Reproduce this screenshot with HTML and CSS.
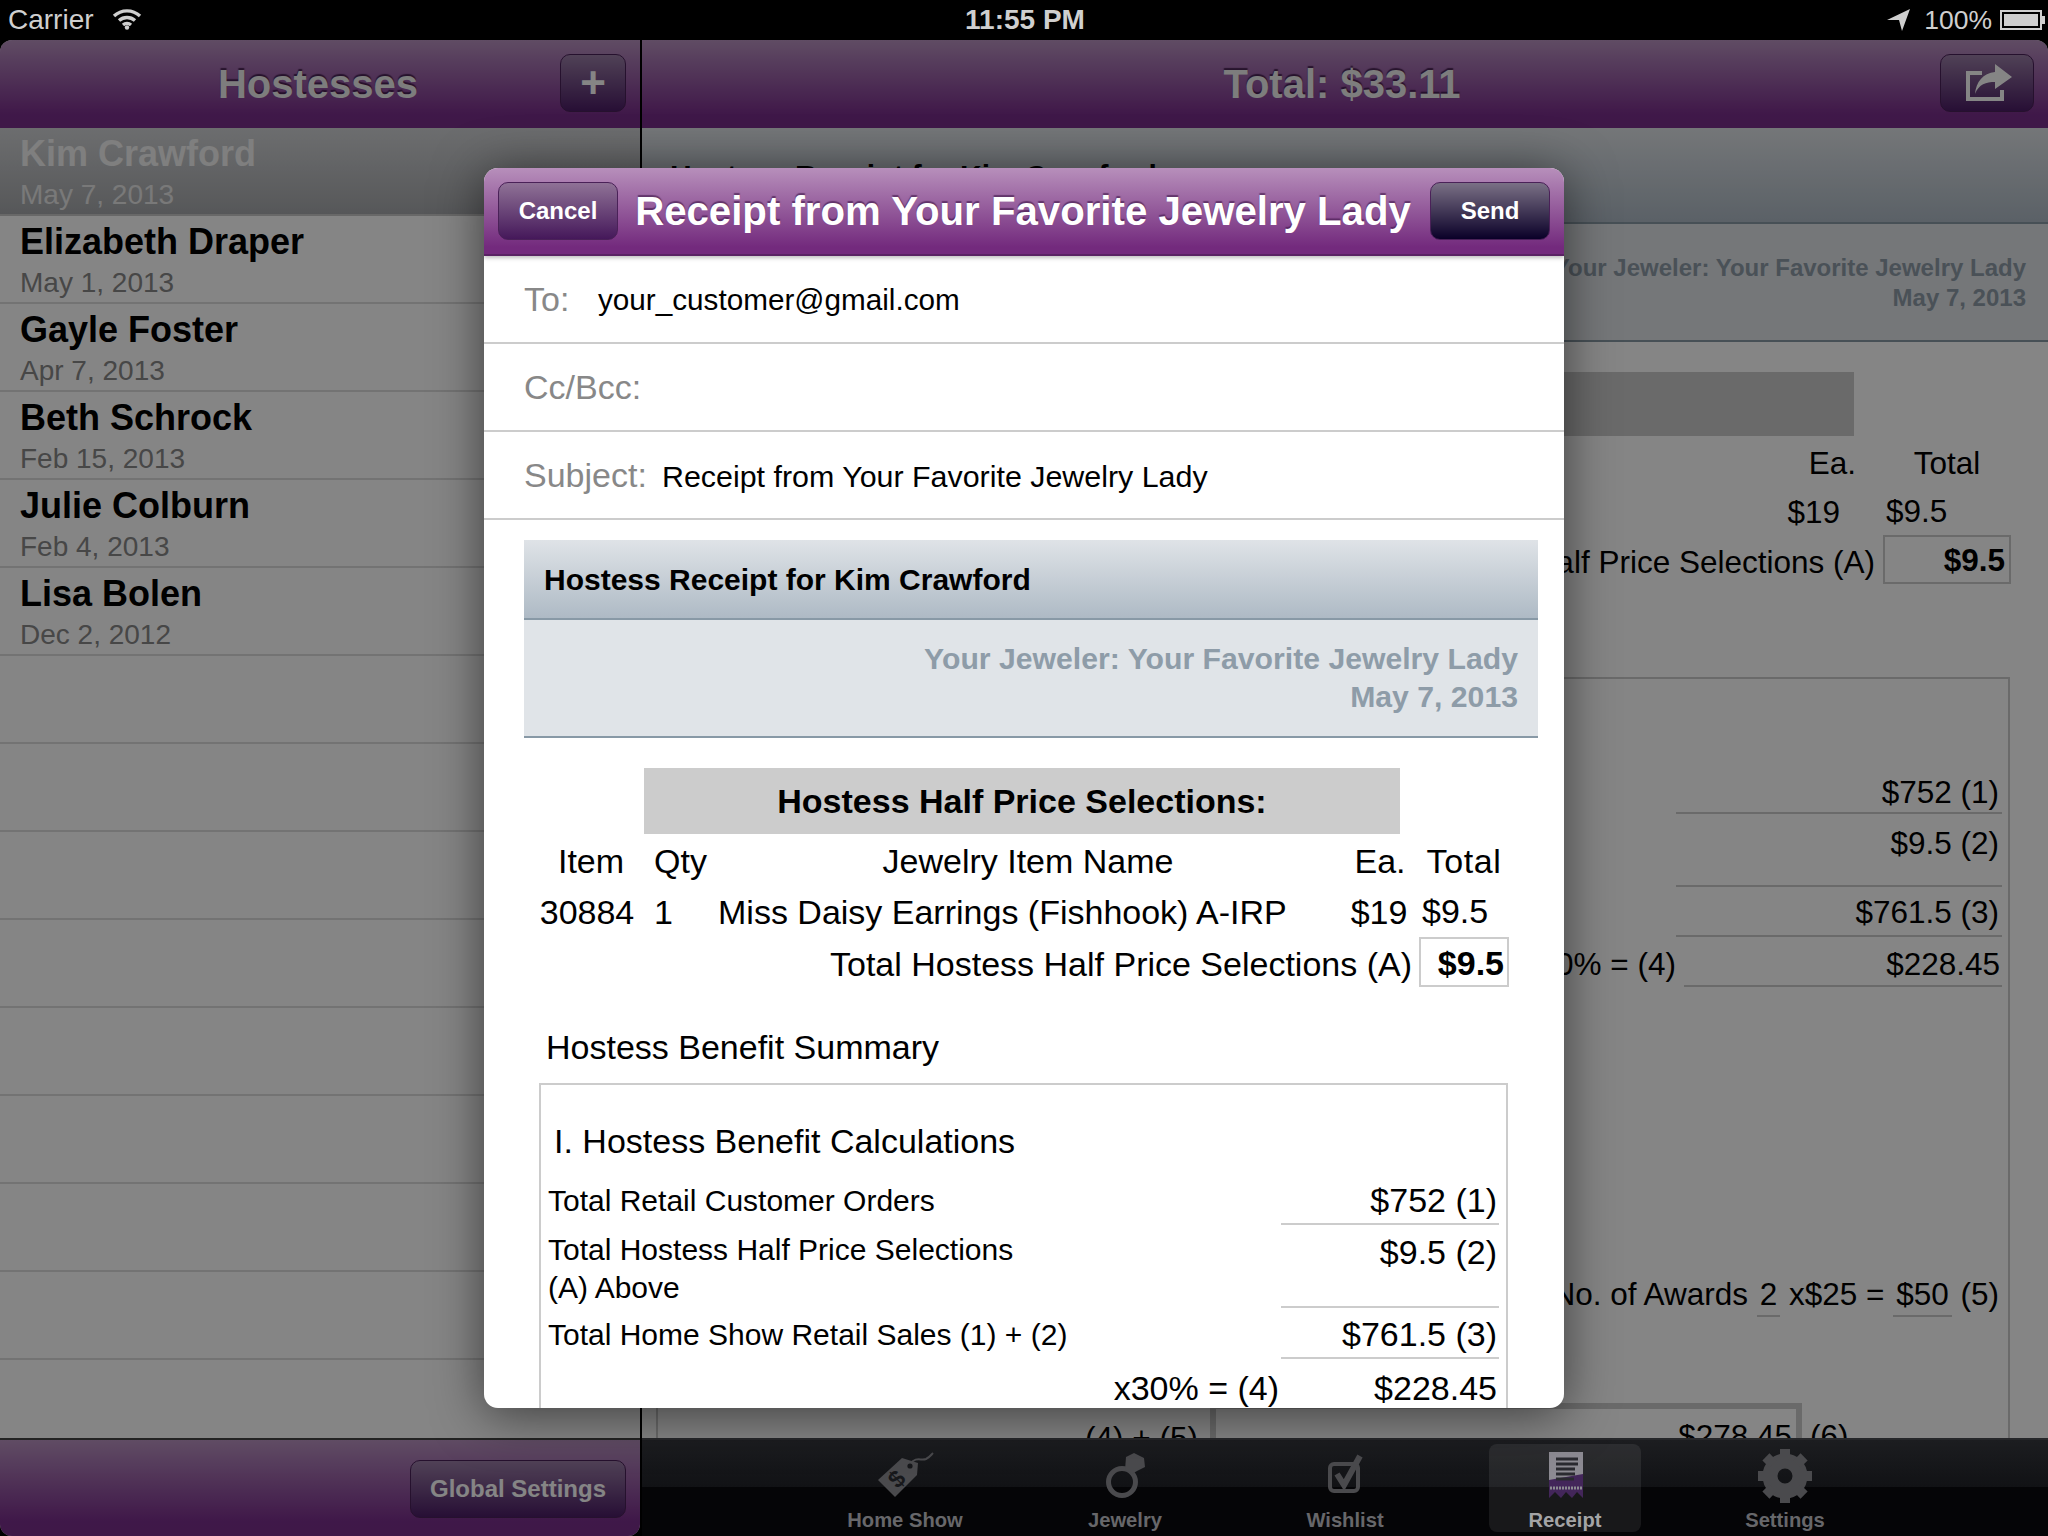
FILE: index.html
```html
<!DOCTYPE html>
<html lang="en">
<head>
	<meta charset="UTF-8">
	<title>Hostess Receipt</title>
	<link rel="stylesheet" href="styles.css">
</head>
<body>
	<div class="status">
		<div class="status-left">
			<span>Carrier</span>
			<svg class="wifi" viewBox="0 0 30 23"><path d="M2 9 A19 19 0 0 1 28 9" /><path d="M7 13.5 A12 12 0 0 1 23 13.5" /><path d="M11 18 A6 6 0 0 1 19 18" /><circle cx="15" cy="20.5" r="2.2" /></svg>
		</div>
		<div class="status-time">11:55 PM</div>
		<div class="status-right">
			<svg class="locate" viewBox="0 0 23 22"><polygon points="23,0 0,11 12,11 15,22" /></svg>
			<span class="percent">100%</span>
			<div class="battery"><div class="battery-fill"></div></div>
		</div>
	</div>

	<div class="split">
		<div class="master">
			<div class="nav nav-left">
				<div class="nav-title">Hostesses</div>
				<div class="nav-btn plus-btn">+</div>
			</div>
			<ul class="list">
				<li class="row selected"><b>Kim Crawford</b><span>May 7, 2013</span></li>
				<li class="row"><b>Elizabeth Draper</b><span>May 1, 2013</span></li>
				<li class="row"><b>Gayle Foster</b><span>Apr 7, 2013</span></li>
				<li class="row"><b>Beth Schrock</b><span>Feb 15, 2013</span></li>
				<li class="row"><b>Julie Colburn</b><span>Feb 4, 2013</span></li>
				<li class="row"><b>Lisa Bolen</b><span>Dec 2, 2012</span></li>
				<li class="row"></li>
				<li class="row"></li>
				<li class="row"></li>
				<li class="row"></li>
				<li class="row"></li>
				<li class="row"></li>
				<li class="row"></li>
				<li class="row"></li>
				<li class="row"></li>
			</ul>
			<div class="master-bar">
				<div class="nav-btn global-btn">Global Settings</div>
			</div>
		</div>

		<div class="detail">
			<div class="nav nav-right">
				<div class="nav-title">Total: $33.11</div>
				<div class="nav-btn share-btn">
					<svg class="share" viewBox="0 0 46 38"><path class="share-tray" d="M16 9 H2 V35 H36 V26" /><path class="share-arrow" d="M29 0 L46 13 L29 25 V18 C20 18 13 20 9 30 C10 18 17 9 29 8 Z" /></svg>
				</div>
			</div>
			<div class="back">
				<div class="head">Hostess Receipt for Kim Crawford</div>
				<div class="sub sub-back">
					<div>Your Jeweler: Your Favorite Jewelry Lady</div>
					<div>May 7, 2013</div>
				</div>
				<div class="back-body">
					<div class="back-bar">Hostess Half Price Selections:</div>
					<table class="back-items">
						<tr class="bi-head"><td class="bi-item">Item</td><td class="bi-qty">Qty</td><td class="bi-name">Jewelry Item Name</td><td class="bi-ea">Ea.</td><td class="bi-total">Total</td></tr>
						<tr class="bi-line"><td>30884</td><td>1</td><td>Miss Daisy Earrings (Fishhook) A-IRP</td><td class="bi-ea2">$19</td><td class="bi-tot2">$9.5</td></tr>
						<tr class="bi-sum"><td colspan="4" class="bi-label">Total Hostess Half Price Selections (A)</td><td class="bi-box"><b>$9.5</b></td></tr>
					</table>
					<div class="back-box">
						<table class="back-calc">
							<tr class="bc1"><td>Total Retail Customer Orders</td><td class="bc-val">$752 (1)</td></tr>
							<tr class="bc2"><td>Total Hostess Half Price Selections (A) Above</td><td class="bc-val">$9.5 (2)</td></tr>
							<tr class="bc3"><td>Total Home Show Retail Sales (1) + (2)</td><td class="bc-val">$761.5 (3)</td></tr>
							<tr class="bc3"><td class="bc-x">x30% = (4)</td><td class="bc-plain"><div class="bc-last">$228.45</div></td></tr>
						</table>
						<div class="awards">No. of Awards <u>2</u> x$25 = <u>$50</u> (5)</div>
						<div class="grand">
							<span class="grand-label">(4) + (5)</span>
							<div class="grand-box">$278.45</div>
							<span class="grand-six">(6)</span>
						</div>
					</div>
				</div>
			</div>
			<div class="tabbar">
				<div class="tab">
					<svg class="tab-icon" viewBox="0 0 60 60"><path class="ic-fill" d="M3 36 L27 14 L43 19 L42 31 L20 53 Z" /><path class="ic-line" d="M35 20 C41 12 46 17 51 15 C55 13 56 11 58 9" /><circle class="ic-hole" cx="35" cy="22" r="2.6" /><text class="ic-dollar" x="15" y="43" transform="rotate(-45 22 35)">$</text></svg>
					<span>Home Show</span>
				</div>
				<div class="tab">
					<svg class="tab-icon" viewBox="0 0 60 60"><circle class="ic-ring" cx="27" cy="38" r="13.5" /><polygon class="ic-fill" points="31,13 39,9 49,14 50,23 42,27 37,30 30,26" /></svg>
					<span>Jewelry</span>
				</div>
				<div class="tab">
					<svg class="tab-icon" viewBox="0 0 60 60"><rect class="ic-box" x="15" y="20" width="28" height="27" rx="4" /><path class="ic-check" d="M22 30 L29 41 L45 12" /></svg>
					<span>Wishlist</span>
				</div>
				<div class="tab active">
					<svg class="tab-icon" viewBox="0 0 60 60">
						<rect class="rc-top" x="14" y="8" width="34" height="34" />
						<path class="rc-low" d="M14 36 L48 30 V54 L42 48 L37 54 L31 48 L26 54 L20 48 L14 54 Z" />
						<path class="rc-lines" d="M21 15 H43 M21 20 H43 M21 25 H40 M21 30 H40 M21 35 H39" />
						<path class="rc-dots" d="M15 44 H47" />
					</svg>
					<span>Receipt</span>
				</div>
				<div class="tab">
					<svg class="tab-icon" viewBox="0 0 60 60">
						<circle class="ic-gear" cx="30" cy="32" r="15" />
						<g class="ic-teeth">
							<rect x="25" y="5" width="10" height="10" />
							<rect x="25" y="49" width="10" height="10" />
							<rect x="3" y="27" width="10" height="10" />
							<rect x="47" y="27" width="10" height="10" />
							<rect x="25" y="5" width="10" height="10" transform="rotate(45 30 32)" />
							<rect x="25" y="49" width="10" height="10" transform="rotate(45 30 32)" />
							<rect x="3" y="27" width="10" height="10" transform="rotate(45 30 32)" />
							<rect x="47" y="27" width="10" height="10" transform="rotate(45 30 32)" />
						</g>
					</svg>
					<span>Settings</span>
				</div>
			</div>
		</div>
	</div>

	<div class="dim"></div>

	<div class="modal">
		<div class="modal-head">
			<div class="mbtn">Cancel</div>
			<div class="modal-title">Receipt from Your Favorite Jewelry Lady</div>
			<div class="mbtn send">Send</div>
		</div>
		<div class="field"><label class="to-label">To:</label><span class="to-value">your_customer@gmail.com</span></div>
		<div class="field"><label>Cc/Bcc:</label></div>
		<div class="field"><label class="subj-label">Subject:</label><span class="subj-value">Receipt from Your Favorite Jewelry Lady</span></div>
		<div class="mail">
			<div class="head head-mail">Hostess Receipt for Kim Crawford</div>
			<div class="sub">
				<div>Your Jeweler: Your Favorite Jewelry Lady</div>
				<div>May 7, 2013</div>
			</div>
			<div class="bar">Hostess Half Price Selections:</div>
			<table class="items">
				<tr class="i-head"><td class="i-item">Item</td><td class="i-qty">Qty</td><td class="i-name">Jewelry Item Name</td><td class="i-ea">Ea.</td><td class="i-total">Total</td></tr>
				<tr class="i-line"><td class="i-num">30884</td><td class="i-one">1</td><td class="i-desc">Miss Daisy Earrings (Fishhook) A-IRP</td><td class="i-ea2">$19</td><td class="i-tot2">$9.5</td></tr>
				<tr class="i-sum"><td colspan="4" class="i-label">Total Hostess Half Price Selections (A)</td><td class="i-box"><b>$9.5</b></td></tr>
			</table>
			<div class="summary-title">Hostess Benefit Summary</div>
			<div class="box">
				<div class="box-title">I. Hostess Benefit Calculations</div>
				<table class="calc">
					<tr class="c-r1"><td>Total Retail Customer Orders</td><td class="c-val">$752 (1)</td></tr>
					<tr class="c-r2"><td class="c-two">Total Hostess Half Price Selections<br>(A) Above</td><td class="c-val c-top">$9.5 (2)</td></tr>
					<tr class="c-r3"><td>Total Home Show Retail Sales (1) + (2)</td><td class="c-val">$761.5 (3)</td></tr>
					<tr class="c-r4"><td class="c-x">x30% = (4)</td><td class="c-val">$228.45</td></tr>
				</table>
			</div>
		</div>
	</div>
</body>
</html>
```

FILE: styles.css
```css
* {margin: 0;padding: 0;box-sizing: border-box;}
html, body {width: 2048px;height: 1536px;overflow: hidden;}
body {background: #000;font-family: "Liberation Sans", Arial, sans-serif;color: #000;position: relative;}
ul {list-style: none;}
table {border-collapse: collapse;table-layout: fixed;}
td {padding: 0;}

/* status bar */
.status {height: 40px;display: flex;align-items: center;justify-content: space-between;color: #cfcfcf;font-size: 28px;padding: 0 6px 0 8px;position: relative;z-index: 2;}
.status-left {display: flex;align-items: center;gap: 18px;width: 600px;}
.wifi {width: 30px;height: 23px;margin-top: -4px;}
.wifi path {fill: none;stroke: #cfcfcf;stroke-width: 3.4;}
.wifi circle {fill: #cfcfcf;}
.status-time {font-weight: bold;font-size: 28px;}
.status-right {display: flex;align-items: center;justify-content: flex-end;width: 600px;}
.percent {font-size: 26.5px;}
.locate {width: 23px;height: 22px;fill: #cfcfcf;margin-right: 14px;}
.battery {width: 42px;height: 20px;border: 2px solid #cfcfcf;padding: 2px;margin-left: 8px;position: relative;}
.battery::after {content: "";position: absolute;right: -5px;top: 4px;width: 3px;height: 8px;background: #cfcfcf;}
.battery-fill {background: #cfcfcf;height: 100%;}

.split {display: flex;height: 1496px;}
.master {width: 640px;display: flex;flex-direction: column;background: #fff;border-radius: 12px 0 12px 12px;overflow: hidden;}
.detail {flex: 1;margin-left: 2px;display: flex;flex-direction: column;background: #fff;border-radius: 0 12px 0 0;overflow: hidden;}

/* navigation bars */
.nav {height: 88px;background: linear-gradient(#b892c0, #7a2e8c 85%, #7a2e8a);display: flex;align-items: center;justify-content: center;position: relative;flex: none;}
.nav-title {color: #efefef;font-size: 40px;font-weight: bold;text-shadow: 0 -2px 1px rgba(40,10,50,.7);}
.nav-left .nav-title {margin-right: 4px;}
.nav-right .nav-title {margin-right: 6px;}
.nav-btn {position: absolute;height: 58px;border-radius: 10px;border: 1px solid #4a2158;background: linear-gradient(#9a7ea6, #4c1d66);color: #fff;display: flex;align-items: center;justify-content: center;font-weight: bold;}
.plus-btn {right: 14px;top: 14px;width: 66px;font-size: 44px;}
.share-btn {right: 14px;top: 14px;width: 94px;}
.share {width: 46px;height: 38px;margin-left: 4px;}
.share-tray {fill: none;stroke: #fff;stroke-width: 4;}
.share-arrow {fill: #fff;}

/* hostess list */
.list {flex: 1;overflow: hidden;}
.row {height: 88px;padding: 6px 20px 0;border-bottom: 2px solid #dcdcdc;}
.row b {display: block;font-size: 36px;line-height: 40px;}
.row span {display: block;font-size: 28px;line-height: 40px;color: #888;margin-top: 1px;}
.row.selected {background: linear-gradient(#d0d2d5, #a6a8ab);border-bottom: 2px solid #c8c8c8;}
.row.selected b {color: #f3f3f3;}
.row.selected span {color: #e8e8e8;}
.master-bar {height: 98px;flex: none;border-top: 2px solid #444;background: linear-gradient(#b892c0, #7a2e8c 85%, #7a2e8a);position: relative;}
.global-btn {right: 14px;top: 20px;width: 216px;font-size: 24px;}

/* receipt behind the modal */
.back {flex: 1;overflow: hidden;}
.head {height: 96px;padding: 30px 0 0 28px;font-size: 30px;font-weight: bold;line-height: 36px;background: linear-gradient(#dfe3e7, #aebac5);border-bottom: 2px solid #8899a6;}
.sub {height: 118px;padding: 20px 20px 0 0;text-align: right;color: #8e9ca8;font-weight: bold;font-size: 30.2px;line-height: 38px;background: #e0e4e8;border-bottom: 2px solid #8899a6;}
.sub-back {font-size: 24px;line-height: 30px;padding: 29px 22px 0 0;}
.back-body {padding: 30px 38px 0 14px;}
.back-bar {height: 64px;width: 1120px;margin-left: 78px;background: #ccc;text-align: center;font-size: 34px;font-weight: bold;line-height: 64px;}
.back-items {width: 1354px;font-size: 31.5px;}
.bi-item {width: 140px;}
.bi-qty {width: 80px;}
.bi-name {width: 870px;text-align: center;}
.bi-ea {width: 138px;text-align: right;padding-right: 28px;}
.bi-total {width: 126px;text-align: center;}
.bi-head {height: 54px;}
.bi-line {height: 46px;}
.bi-line td {padding-bottom: 2px;}
.bi-ea2 {text-align: right;padding-right: 44px;}
.bi-tot2 {padding-left: 2px;}
.bi-sum {height: 47px;}
.bi-label {text-align: right;padding: 6px 8px 0 0;}
.bi-box {border: 2px solid #ccc;text-align: right;padding: 2px 4px 0 0;}
.back-box {border: 2px solid #ccc;margin-top: 93px;height: 900px;padding: 85px 6px 0;font-size: 31.5px;}
.back-calc {width: 1338px;}
.back-calc td:first-child {width: 1012px;}
.bc1 {height: 49px;}
.bc1 td {padding-top: 9px;}
.bc2 {height: 73px;vertical-align: top;}
.bc3 {height: 50px;}
.bc3 td {padding-top: 2px;}
.bc-val {text-align: right;border-bottom: 2px solid #ccc;padding-right: 3px;}
.bc2 .bc-val {padding-top: 11px;}
.back-calc .bc-x {text-align: right;padding-right: 0;padding-top: 6px;}
.bc3 .bc-plain {padding-top: 0;}
.bc-last {margin-left: 8px;height: 50px;line-height: 54px;text-align: right;border-bottom: 2px solid #ccc;padding-right: 2px;}
.awards {text-align: right;padding-right: 3px;margin-top: 287px;line-height: 40px;}
.awards u {text-decoration: none;border-bottom: 2px solid #ccc;padding: 0 3px 3px;}
.grand {display: flex;align-items: flex-start;margin-top: 89px;padding-left: 421px;}
.grand-label {width: 125px;padding-top: 17px;}
.grand-box {width: 592px;height: 60px;border: 6px solid #ccc;text-align: right;padding: 9px 4px 0 0;}
.grand-six {margin-left: 8px;padding-top: 15px;}

/* tab bar sits above the dim layer with its colours already dimmed */
.tabbar {height: 98px;flex: none;border-top: 2px solid #26272a;background: linear-gradient(#1c1d20, #111215 49%, #050507 49%);display: flex;justify-content: center;position: relative;z-index: 2;}
.tab {width: 152px;height: 88px;margin: 4px 34px 0;border-radius: 8px;display: flex;flex-direction: column;align-items: center;color: #67676a;font-size: 20.2px;font-weight: bold;}
.tab span {margin-top: 4px;line-height: 24px;white-space: nowrap;}
.tab-icon {width: 60px;height: 60px;display: block;}
.tab.active {background: rgba(255,255,255,.08);color: #a4a4a6;}
.ic-fill {fill: #4a4a4d;}
.ic-line {fill: none;stroke: #4a4a4d;stroke-width: 2;}
.ic-hole {fill: #17181b;}
.ic-dollar {font-size: 24px;font-weight: bold;fill: #17181b;font-family: "Liberation Sans", sans-serif;}
.ic-ring {fill: none;stroke: #4a4a4d;stroke-width: 5;}
.ic-box {fill: none;stroke: #4a4a4d;stroke-width: 4;}
.ic-check {fill: none;stroke: #4a4a4d;stroke-width: 6;}
.ic-gear {fill: none;stroke: #4a4a4d;stroke-width: 15;}
.ic-teeth {fill: #4a4a4d;}
.rc-top {fill: #8c8a92;}
.rc-low {fill: #43265a;}
.rc-lines {fill: none;stroke: #2a2a30;stroke-width: 3;}
.rc-dots {fill: none;stroke: #8c8a92;stroke-width: 3;stroke-dasharray: 2 1;}

/* dim layer and mail sheet */
.dim {position: absolute;top: 0;left: 0;right: 0;bottom: 0;background: rgba(0,0,0,.48);z-index: 1;}
.modal {position: absolute;left: 484px;top: 168px;width: 1080px;height: 1240px;background: #fff;border-radius: 14px;box-shadow: 0 6px 50px rgba(0,0,0,.55);overflow: hidden;z-index: 3;display: flex;flex-direction: column;}
.modal-head {height: 88px;flex: none;background: linear-gradient(#b78fbb, #732a7d 92%);border-bottom: 2px solid #5a2264;box-shadow: 0 2px 4px rgba(0,0,0,.25);display: flex;align-items: center;padding: 0 14px 0 14px;position: relative;}
.modal-title {flex: 1;text-align: center;color: #fff;font-size: 40.2px;font-weight: bold;white-space: nowrap;text-shadow: 0 -2px 1px rgba(60,20,70,.6);margin-right: 2px;padding-top: 2px;}
.mbtn {width: 120px;height: 58px;border-radius: 10px;border: 1px solid #4a2158;background: linear-gradient(#8f7296, #45185a);color: #fff;font-size: 24px;font-weight: bold;display: flex;align-items: center;justify-content: center;flex: none;}
.send {background: linear-gradient(#7a7085, #0a0028);}
.field {height: 88px;flex: none;border-bottom: 2px solid #ccc;padding: 2px 0 0 40px;display: flex;align-items: center;font-size: 30px;}
.field label {color: #888;font-size: 34px;margin-top: -2px;}
.to-label {width: 74px;}
.to-value {font-size: 29.7px;}
.subj-label {width: 138px;}
.subj-value {font-size: 30.4px;}
.mail {flex: 1;overflow: hidden;padding: 20px 26px 0 40px;}
.head-mail {height: 80px;padding: 22px 0 0 20px;}
.bar {width: 756px;height: 66px;margin: 30px 0 0 120px;background: #ccc;text-align: center;font-size: 34px;font-weight: bold;line-height: 66px;}
.items {width: 976px;margin-left: 8px;font-size: 34px;}
.i-item {width: 116px;text-align: center;padding-left: 2px;}
.i-qty {width: 68px;padding-left: 6px;}
.i-name {width: 622px;text-align: center;padding-left: 2px;}
.i-ea {width: 82px;text-align: center;padding-left: 2px;}
.i-total {width: 88px;text-align: center;letter-spacing: .6px;}
.i-head {height: 54px;}
.i-line {height: 50px;}
.i-line td {padding-bottom: 2px;}
.i-num {text-align: center;padding-right: 6px;}
.i-one {padding-left: 6px;}
.i-desc {padding-left: 2px;}
.i-ea2 {text-align: center;}
.i-tot2 {padding-left: 2px;}
.i-sum {height: 48px;}
.i-label {text-align: right;padding: 4px 7px 0 0;}
.i-box {border: 2px solid #ccc;text-align: right;padding: 3px 3px 0 0;}
.summary-title {font-size: 34px;line-height: 40px;margin: 40px 0 16px 22px;}
.box {width: 969px;margin-left: 15px;border: 2px solid #ccc;border-bottom: 0;height: 400px;padding: 36px 8px 0;}
.box-title {font-size: 34px;line-height: 40px;padding-left: 5px;margin-bottom: 16px;}
.calc {width: 951px;margin-left: -1px;font-size: 30px;}
.calc td:first-child {width: 733px;}
.calc .c-val {font-size: 34px;text-align: right;border-bottom: 2px solid #ccc;padding-right: 2px;}
.c-r1 {height: 47px;}
.c-r2 {height: 83px;}
.c-r3 {height: 51px;}
.c-r3 td {padding-top: 4px;}
.c-r4 {height: 60px;}
.c-two {line-height: 38px;vertical-align: top;padding-top: 7px;}
.c-top {vertical-align: top;padding-top: 8px;}
.calc .c-x {text-align: right;font-size: 34px;padding-right: 2px;}
```
